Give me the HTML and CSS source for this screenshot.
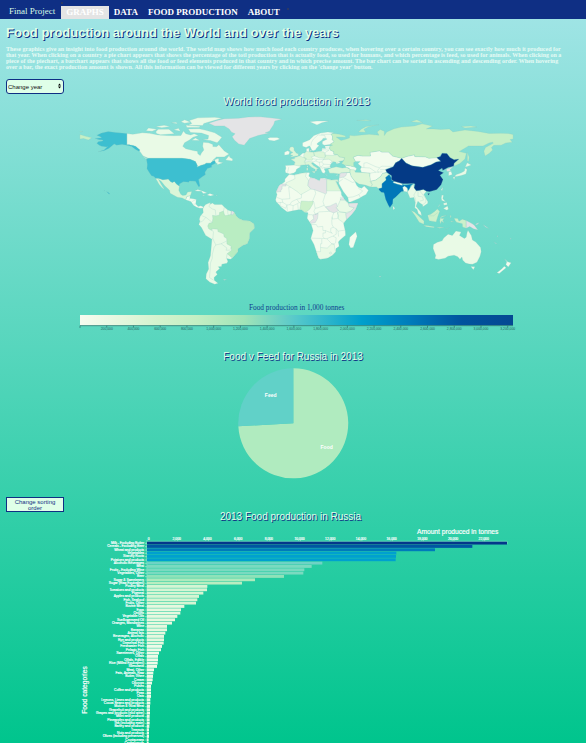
FILE: index.html
```html
<!DOCTYPE html>
<html lang="en">
<head>
<meta charset="utf-8">
<meta name="viewport" content="width=device-width, initial-scale=1">
<title>Final Project</title>
<link rel="stylesheet" href="styles.css">
</head>
<body>
<header class="bar">
  <a class="brand" href="#">Final Project</a>
  <nav>
    <ul class="menu">
      <li><a class="active" href="#">GRAPHS</a></li>
      <li><a href="#">DATA</a></li>
      <li><a href="#">FOOD PRODUCTION</a></li>
      <li><a href="#">ABOUT</a></li>
    </ul>
  </nav>
</header>
<main>
  <section class="intro">
    <h1>Food production around the World and over the years</h1>
    <p>These graphics give an insight into food production around the world. The world map shows how much food each country produces, when hovering over a certain country, you can see exactly how much it produced for<br>
    that year. When clicking on a country a pie chart appears that shows the percentage of the totl production that is actually food, so used for humans, and which percentage is feed, so used for animals. When clicking on a<br>
    piece of the piechart, a barchart appears that shows all the food or feed elements produced in that country and in which precise amount. The bar chart can be sorted in ascending and descending order. When hovering<br>
    over a bar, the exact production amount is shown. All this information can be viewed for different years by clicking on the 'change year' button.</p>
    <div class="picker">
      <select aria-label="Change year"><option>Change year</option></select>
      <svg viewBox="0 0 6 10" aria-hidden="true"><path d="M0 4 3 0 6 4ZM0 6 3 10 6 6Z"/></svg>
    </div>
  </section>

  <section class="world">
    <h2>World food production in 2013</h2>
    <svg class="chart" viewBox="0 0 1758 678" role="img" aria-label="World map">
      <defs>
        <linearGradient id="ramp">
          <stop offset="0" stop-color="#f7fcf0"/><stop offset=".18" stop-color="#d3f3ce"/>
          <stop offset=".27" stop-color="#c3efc4"/><stop offset=".38" stop-color="#a0e4b8"/>
          <stop offset=".5" stop-color="#55c8cb"/><stop offset=".65" stop-color="#00a0cc"/>
          <stop offset=".76" stop-color="#007dbb"/><stop offset=".88" stop-color="#00539e"/>
          <stop offset="1" stop-color="#054892"/>
        </linearGradient>
      </defs>
      <g class="map" transform="translate(889.5 328) scale(3.61 -3.61)">
        <g class="v1">
          <path d="M-141,69.6 -136,69 -128,70.3 -122,69.8 -115,68.5 -108,68 -102,67.8 -96,68 -94,71.8 -92,69.5 -88,68.5 -85,69.5 -81.5,68 -86,66.5 -89,64.2 -93,62 -94.5,59 -92,57 -85,55.3 -82.3,55 -82,52.9 -80,51.3 -79,53.5 -77,56 -78,59 -77.5,62.3 -73,62 -69.5,60.5 -69.5,58.8 -66.5,58.7 -64.5,60.3 -62,57.5 -60,55.2 -56,52.6 -58,51.4 -60,50.2 -66.5,50.2 -70,47 -65,49 -64.5,47.8 -64.8,46.2 -61,45.3 -65.8,43.6 -66,45 -67.2,45.1 -68,47.2 -70,46.5 -71.5,45 -75,45 -76.5,44 -79,43.3 -82.5,42 -82.4,43 -84,46.3 -88.5,48.2 -95,49 -123,49 -127.5,51 -130.3,55 -133.5,58.8 -137,59 -139,60.3 -141,60.3Z"/>
          <path d="M-90,73.5 -81,73.7 -76,72.5 -68,70.3 -62,66.5 -64.5,63.5 -66,62 -71.5,63.8 -78,64.5 -73.5,65 -73,68 -79,70 -88,70.5ZM-117,71 -115,73.2 -106,73.3 -101.5,69.5 -113,68.6 -116,69.5ZM-125,72 -123,74.3 -116,73.2 -120,71.5ZM-90,76.5 -87,78 -89,80.5 -82,82.7 -68,83.1 -62,82.4 -70,80 -77,78 -78,76.3ZM-117,75.5 -110,76.6 -105,75.5 -112,74.5ZM-92,76.5 -80,75.6 -81,74.6 -91,74.7ZM-102,72.8 -98,74 -96.5,71.5ZM-96,79.5 -93,81 -88,79 -93,78.2ZM-104,78.5 -100,79 -99,77.8ZM-59,47.7 -55.8,51.5 -55.5,50 -53,48.5 -53.3,46.8ZM-87,64 -84,66 -80.3,63.8ZM-128,50.7 -123.5,48.4 -125.5,48.8Z"/>
          <path d="M-77.3,8.6 -75.5,10.7 -71.7,12.3 -71.5,10.8 -70,12 -68,10.6 -62,10.7 -60,8.5 -57,6 -51.8,4.3 -50,1 -48,-1 -44,-2.7 -39,-3 -35.3,-5.5 -35,-9 -39,-13 -39.2,-17.8 -41,-22 -44.5,-23.2 -48.5,-26 -48.8,-28.5 -52.2,-32.5 -53.5,-34 -55,-34.9 -58,-34.3 -57,-36.5 -57.8,-38.2 -62,-39 -62.3,-40.8 -65,-41 -63.8,-42.5 -67,-45.5 -65.8,-47.5 -68.5,-50 -68.3,-52.3 -65.2,-54.7 -68,-55.6 -72,-54 -75.3,-51 -75,-47 -73,-43 -73.5,-37.5 -71.5,-32 -70.3,-18.3 -75.5,-15 -79,-8.5 -81.2,-6 -80.2,-3.3 -80.8,-1.5 -80,.8 -77.5,4 -77.8,7Z"/>
          <path d="M142.5,-10.8 145.3,-15 146.2,-18.8 149,-20.5 153,-25 153.5,-28.5 152.5,-32.3 150,-37.3 146.3,-39 143.5,-38.8 140.5,-38 138,-35.5 137.5,-33 135.8,-34.9 134,-32.7 131,-31.5 126,-32.3 123.5,-34 118,-35 115,-34.2 115.7,-31.7 113.5,-26 113.8,-22.5 117,-20.7 121,-19.5 122.3,-17.2 126,-14 129.5,-15 132.5,-11.3 136.8,-12.2 135.5,-15 139.5,-17.5 141,-16.5 141.7,-12.8ZM144.8,-40.8 148.3,-41 147,-43.6Z"/>
        </g>
        <g class="v0">
          <path d="M-92.2,14.6 -91,17.5 -89.2,17.8 -88.3,18.4 -88.6,15.8 -83.3,15 -83.7,11 -81.7,9 -79.5,9.6 -77.3,8.6 -78,7.5 -80.3,7.5 -83,8.3 -85.7,10 -87.6,13ZM-84.8,21.9 -82,23.1 -77,21.5 -74.3,20.2 -77.6,19.9 -79,21.6ZM-74.4,18.5 -72,19.9 -68.5,18.5 -71.5,17.8ZM-78.3,18.4 -76.3,18.2 -77,17.8ZM-67,18.4 -65.7,18.3 -66.5,18Z"/>
          <path d="M-24,65.6 -22,66.4 -16,66.4 -13.7,65 -18.5,63.5 -22.5,64Z"/>
          <path d="M-6,35.8 -2,35.1 5,36.8 10,37.3 11,36.8 10.2,34.3 11.5,33 15.2,32.3 19,30.3 20,32.5 23,32.6 29,31 32,31.3 34.2,31.2 34.9,29.5 32.6,29.9 35.5,24 37.2,21 37.4,18.5 39.5,15.3 43.2,12 43.3,11.5 51.2,11.9 49,6.5 46,2.5 41.6,-1.7 39.2,-5 39.5,-7 40.5,-11 40.8,-14.8 36,-19 34.8,-20.5 35.5,-24 32.8,-26 32.5,-28.5 30,-31.3 26,-33.8 20,-34.8 18.3,-33.8 16.5,-28.6 14.5,-22.5 11.8,-17.5 13.8,-11 12.2,-6 8.8,-.8 9.6,3.8 6.8,4.3 4.3,6.3 1.5,6.2 -4,5.2 -7.7,4.4 -13,8.5 -15,11 -16.8,12.8 -17.4,14.7 -16.2,19 -17,21 -14.5,26.2 -9.8,29.5 -9.6,31.8ZM49.3,-12 50.4,-15.7 47.2,-25 45,-25.4 43.5,-22.5 44.3,-16.5Z"/>
          <path d="M-9.3,43 -1.8,43.4 -1.2,46 -4.7,48.4 -1.5,48.7 -1.5,49.7 2.5,51 5,53.3 8.2,53.6 8.2,57 10.5,57.6 10.5,54.5 14,54 18.5,54.8 21,55.2 21.2,57.4 24.2,57.3 23.5,59.2 28,59.5 27.5,57.5 28,56 31,54.5 31,52.5 34,52 35.5,50.3 40,49.5 39.8,47.9 38,47 35,46.3 36.5,45.3 33.5,44.5 32.5,46 30.7,46.4 28.7,44.5 27.8,42.5 28.5,41.2 26,40.8 23,40.3 24,38 23,36.4 21.3,37.3 19.4,41.5 15,44.5 13.6,45.5 12.3,45 13.8,43 18.4,40.2 16.8,40.3 16.5,38.5 15.7,38 15.7,40 12.3,41.8 10.2,43.9 7.5,43.8 3.2,43.2 3.2,41.9 0,40 -.5,38 -2.2,36.8 -5.5,36 -9,37 -9.4,38.8 -8.8,41Z"/>
          <path d="M5,59 5,62 11,64.5 14.5,68 20,70 26,71 31,70.3 28.5,69 30,67.5 29.8,64.5 31.3,62.8 28,60.5 23,59.9 21.4,61 21.5,63 25.4,65 24,65.8 22,65.6 21.3,64.3 17.3,61.5 17.2,60.6 18.8,59.7 16.6,57.5 16,56.2 14.2,55.4 12.8,55.5 11.2,59 10.5,59.3 8,58ZM-10,51.6 -10,54 -7.5,55.3 -5.6,54.5 -6.3,52.2ZM11,79.5 17,80 27,80 21,78.5 17,76.8ZM23.6,35.4 26.3,35.2 24.8,34.9ZM32.4,35 34.5,35.6 33.8,34.7ZM11,55.6 12.5,56 12,54.8ZM8.6,42 9.5,43 9.4,41.5Z"/>
          <path d="M47,50 51,51.5 55,51 61.5,51 61,54 69,55.3 71,54.2 76.5,54.2 80,50.9 87.4,49.1 85.5,47 82.3,45.3 80.3,42 74,40 75,37.4 71.5,36.5 70,34 66,31 61,29.8 60.8,34.5 61,36.7 54,37.3 53,40 54,42 51,44.5 53,46.5 49,46.5ZM40,43.4 45,42.7 48.5,41.8 50,40.3 48.8,38.5 44.8,39.2 43.5,41 41.5,41.5Z"/>
          <path d="M34.9,29.5 36,36 36.7,36.8 42,37.2 44.5,37.3 45.5,34 48.5,30 50,26.7 51.5,25 54,24.1 56.3,26 59.8,22.5 57.8,19 55,17.5 52,15.7 45,12.8 43.3,12.7 42.7,16.5 39,21.2 35.2,28Z"/>
          <path d="M87.4,49.1 92,50.7 98,52 98.3,50.5 107,50.3 110,49.2 116.5,49.8 119.8,46.7 116,46 111.8,43.7 105,41.6 96,42.8 91,45.2ZM80.2,28.8 81,30 88,28 88,26.5 84,27.4ZM88.2,25 89.8,26 92,24.5 92.2,21 89,21.7ZM80,9.7 81.8,7.5 80.5,6Z"/>
          <path d="M126.5,37.8 128.5,38.3 129.4,35.5 126.4,34.5ZM120.2,23 121.7,25.2 121,22Z"/>
          <path d="M172.7,-34.5 175.5,-37 178.4,-37.7 176,-41.3 174,-39.3 174.8,-37ZM172.7,-40.6 174.2,-41.8 171,-44.5 168.5,-46.6 166.5,-46 170.5,-43Z"/>
        </g>
        <g class="v1">
          <path d="M92.2,21 93,22.2 94,24 97.3,28.2 97.7,24.5 99.5,22 102,22.4 105.5,23.2 108,21.6 105.8,19 109.2,13 109,11.5 105,8.7 104.8,10.5 102.5,12 100.9,13.4 99.3,9.3 103.3,4.5 104,1.4 101.3,3 100.2,6.5 98.3,8 98.7,12 97.6,16.5 94.3,16Z"/>
          <path d="M131,34 133,35.5 137,37 139.5,38.5 140,41 141.8,39.8 140.8,36 137,34.7 133,34ZM130,33.5 131.8,33.5 131,31.3ZM140.2,41.8 141.8,45.3 145.3,43.5 142,42.3Z"/>
          <path d="M120.3,16 120.8,18.5 122.2,18.3 121.6,15.5 124,13 120.7,14ZM122,7.3 125.5,9.5 126.3,7 125,5.8ZM122,11.8 125,12.3 125.2,10.5 122.5,10ZM117.3,8.4 119.5,11.3 118.5,9.5Z"/>
          <path d="M-1.8,35.1 5,36.8 8.3,37 7.5,34 9,32.2 10,30.5 9.5,26.5 11.9,23.5 4.2,19.2 3.2,19 1.2,21 -4.8,25 -8.7,27.3 -8.7,28.7 -3.5,31 -1.2,32.2Z"/>
          <path d="M34,9 36.5,14.5 40,14.5 43,11.5 44,9 48,8 45,5 41,3.9 36,4.5 33,8ZM34.9,-1.5 34,4 36,4.5 41,3.9 41.6,-1.7 39.2,-4.6ZM20,-28.5 20,-25 25.5,-25.6 29.3,-22 31.3,-22.3 32,-26.8 32.5,-28.5 30,-31.3 26,-33.8 20,-34.8 18.3,-33.8 16.5,-28.6Z"/>
        </g>
        <g class="v2">
          <path d="M-117.2,32.5 -114.8,32.5 -111,31.3 -106.5,31.8 -104.7,29.8 -103.2,29 -101.5,29.8 -99.5,27.5 -97.3,26 -97.8,22.5 -96.2,19.2 -94.5,18.2 -91.8,18.6 -90.5,21 -87,21.5 -88,18.3 -89.2,17.8 -91,17.5 -92.2,14.6 -95,16.1 -99,16.7 -105,20 -105.5,22.5 -109.3,26 -112.5,30 -114.7,31.6 -112.5,27.5 -109.6,23 -112.2,25 -114.3,27.5 -115.8,30.2Z"/>
          <path d="M25,31.6 29,31 34.2,31.2 34.9,29.5 32.6,29.9 35.5,24 36.8,22 25,22Z"/>
          <path d="M-1.8,43.4 -1.2,46 -4.7,48.4 -1.5,48.7 -1.5,49.7 2.5,51 8,49 7,46 7.5,43.8 3.2,43.2 3,42.5ZM6,51.8 7,53.6 8.5,54.9 10,54.5 14.2,54 15,51 12.3,50.3 13.7,48.6 13,47.5 7.6,47.6 8,49 6.2,49.5ZM14.2,54 18.5,54.8 23,54.3 24,50.5 22.5,49.2 19,49.5 15,51ZM24,50.5 24,51.7 30.5,51.4 34,52.2 35.5,50.3 40,49.5 39.8,47.9 38,47 35,46.3 33.5,44.5 32.5,46 30.7,46.4 28.2,45.5 29.8,46.4 27,48.3 22.5,48ZM26.2,40 29,41.1 33,42 38,41 41.5,41.5 44.5,40 44.5,37.3 42,37.2 36.7,36.8 36,36 34,36.3 31,36.7 27.5,36.7Z"/>
          <path d="M-5.5,50 1.4,51.2 1.6,52.8 0,53.3 -2,55.8 -2,57.6 -3.2,58.6 -5,58.5 -6,56.5 -4.8,54.8 -3,54 -4.6,53 -5,51.8 -3,51.5ZM7,46 10.5,46.5 13.6,46 12.3,45 13.8,43 18.4,40.2 16.8,40.3 16.5,38.5 15.7,38 15.7,40 12.3,41.8 10.2,43.9 7.5,43.8ZM12.5,38 15.5,38.2 15,36.7ZM8.4,39 8.4,41 9.6,41 9.5,39.2Z"/>
          <path d="M44.5,39.7 48,39.5 49,37.5 54,37.3 61,36.7 60.8,34.5 61.5,31 63,27 61.6,25.2 57,26.8 52,27.6 48.5,30 45.5,34 44.5,37.3ZM61,29.8 66,31 70,34 71.5,36.5 75,37 77,35.5 74,33 74.5,31 71,28 71,24.5 68.2,23.7 66.5,25.3 61.6,25.2 63,27Z"/>
        </g>
        <g class="v3">
          <path d="M2.7,6.4 4.3,6.3 6.8,4.3 8.5,4.7 11,6.8 13.5,11 14,13.3 10,13.2 4,13.6 3.6,11.7Z"/>
          <path d="M109,1.8 111.5,2.5 115,5 117,7 119,5 117.5,1 116,-3.8 110.2,-2.8ZM95.3,5.6 98,4.5 103.5,-.8 106,-3 105.8,-5.8 102,-4 98.5,1.5ZM105.3,-6.7 108.5,-6.7 114.5,-7.8 114.3,-8.6 108,-7.8ZM119.8,-5.5 119,-3 119.8,0 121,1.2 125,1.5 120.5,.3 120.3,-1 123,-1 121.5,-2.3 122.5,-4.8 120.5,-3ZM116,-8.5 123,-8.3 119,-9ZM123.5,-10.2 127,-8.5 125,-9.5ZM127.5,2 128.6,1 128.2,-.7ZM128,-3 130.8,-3.3 128.5,-3.6ZM131,-.8 134,-.9 135,-3.3 137.8,-1.5 141,-2.6 141,-9.1 138,-8 137.8,-5.3 133,-4 132,-2.8Z"/>
        </g>
        <g class="v4">
          <path d="M28,59.5 30,60 28,60.8 31.3,62.8 29.8,64.5 30,67.5 28.5,69 31,69.7 36,69 40.5,67.8 41,66.5 33,66.7 37,63.9 40,64.6 44,66 44.2,68.3 48,67.7 54,68.5 60.5,69 68.5,68.3 67,71 69.5,73 73,71.5 73,68 75,71 81,73.6 87,75 98,76 104.3,77.7 113,75.8 108,73.5 114,73.5 120,73 127,73.5 130,71 140,72.6 151,71.4 160,69.7 170,69.8 176,69.7 180,68.9 180,65 177.5,64.7 179.3,62.5 174,61.8 170,60 164,59.8 162,58 163,56 160,53 156.7,51 155.7,55 157,58 163.5,61.5 163,62.5 160,61.8 155,59.3 143,59.3 135.3,54.7 141.2,53.2 140,48.5 135.5,44.5 131,42.7 131,45 135,48.4 131,47.8 127.5,49.8 125,53 121,53.3 118,49.6 110,49.2 107,50.3 98.3,50.5 98,52 92,50.7 87.4,49.1 80,50.9 76.5,54.2 71,54.2 69,55.3 61,54 61.5,51 55,51 51,51.5 47,50 49,46.5 47.5,45.5 47.5,43 48.5,41.8 45,42.7 40,43.4 37.5,44.8 39.3,47.2 40,49.5 35.5,50.3 34,52.2 31,52.5 31,54.5 28,56 27.5,57.5Z"/>
          <path d="M51.5,71 54,73.5 58,75.5 68.5,77 60,75.3 56,73.2 57.5,70.7ZM95,79.5 100,81 105,78.7ZM137,75.5 145,75.8 150,75 140,74.2ZM142,54 143.5,50 143,46.5 142,47ZM50,80.5 58,81 62,80.3ZM-180,68.9 -175,67.3 -170,66.1 -173,64.3 -177,65.5 -180,65ZM-180,71.4 -177.5,71.2 -180,70.9Z"/>
        </g>
        <path class="v5" d="M-51.6,4.2 -50,1 -48,-1 -44,-2.7 -39,-3 -35.3,-5.5 -35,-9 -39,-13 -39.2,-17.8 -41,-22 -44.5,-23.2 -48.5,-26 -48.8,-28.5 -52.2,-32.5 -53.4,-33.7 -57.6,-30.2 -53.8,-27.2 -54.6,-25.5 -54.3,-24 -57.8,-22.1 -58,-17.5 -60.2,-16.2 -60.5,-13.8 -65.3,-11.8 -65.4,-9.8 -70.5,-9.5 -70.6,-11 -73,-9.4 -73.8,-7.3 -72.8,-5 -70,-4.3 -69.5,-1 -69.8,1.7 -67,1.2 -64,2 -64,4 -60.7,5.2 -60,2.5 -59,1.3 -56.5,1.9 -54.5,2.3 -52.9,2.2Z"/>
        <g class="v6">
          <path d="M-141,69.6 -145,70 -150,70.5 -156.5,71.3 -162,70 -166,68.3 -163,67 -162,66.2 -167.5,65.6 -164,64.5 -161,64.3 -161,63.5 -164.5,63 -166,61.6 -164,60 -162,59 -158,58.5 -157,58.8 -160,56 -165,54.5 -160,55.3 -156,57.3 -153.5,59.2 -151.5,61 -149.5,60 -145,60.5 -141,60 -137,58.8 -134,56.5 -131,55 -130,56 -133.5,58.8 -135.5,59.7 -139,60.3 -141,60.3Z"/>
          <path d="M-123,49 -95,49 -88.5,48.2 -84,46.3 -82.4,43 -82.7,41.7 -79,43.2 -76.5,44 -75,45 -71.5,45 -70,46.5 -68,47.2 -67.2,45 -70.5,43.3 -70.5,41.7 -74,40.5 -76,37.5 -75.7,35.3 -78,33.9 -81.3,31.5 -80.2,26 -81.2,25.3 -82.7,27.8 -84,30 -89,30.2 -89.5,29.2 -94,29.6 -97.3,27.7 -97.3,26 -99.5,27.5 -101.5,29.8 -103.2,29 -104.7,29.8 -106.5,31.8 -111,31.3 -114.8,32.5 -117.2,32.5 -118.5,34 -120.6,34.6 -122.5,37.5 -124.3,40.3 -124,44 -124.7,48.3ZM-160,22.2 -159.3,21.9 -160,21.8ZM-158,21.5 -156.5,20.9 -155,19.7 -155.8,19.1Z"/>
        </g>
        <path class="v7" d="M68.2,23.7 71,24.5 71,28 74.5,31 74,33 77,35.5 79,32.5 78.8,31 81,30 80.2,28.8 84,27.4 88,26.5 88.3,28 89,26.8 92,27 97.3,28.2 95,26.5 94,24 93,22.2 92,24.5 89.8,26 88.2,25 89,21.7 87,21.3 82.3,16.6 80.2,15 80,11.5 77.6,8 76.3,10 74,15 72.7,20.5 70.5,20.8 69,22.3Z"/>
        <path class="v8" d="M74,39.5 80.3,42 82.3,45.3 85.5,47 87.4,49.1 91,45.2 96,42.8 105,41.6 111.8,43.7 116,46 119.8,46.7 116.5,49.8 119.5,50.5 121,53.3 125,53 127.5,49.8 131,47.8 135,48.4 131,45 130.6,42.5 126,41.4 121.5,39 121,40.8 118,39 122.3,37 119.3,35 121.8,31.5 120.2,27 116.5,23 110.5,21.3 108,21.6 105.5,23.2 102,22.4 99.5,22 97.7,24.5 98.5,27.7 97.3,28.2 92,27.9 88.5,27.9 81,30 78.8,31.5 79,34.5 75,37.4ZM109,19.8 110.8,19.8 109.5,18.4Z"/>
        <g class="none">
          <path d="M-73,78.2 -66,80.5 -60,82 -48,82.3 -40,83.4 -30,83.6 -20,82.5 -12,81.5 -18,80 -19,77 -21,74 -22.5,71.5 -26,70.3 -22.5,70 -32,68 -39,65.5 -41,63 -43.5,60 -48,61 -51.5,64 -53.5,67 -51,69.5 -54,70.8 -56,73.5 -60,76 -68,76Z"/>
          <path d="M11.5,33 15.2,32.3 19,30.3 20,32.5 25,31.6 25,20 24,19.5 15,23 11.9,23.5 9.5,26.5 10,30.5ZM-13,27.7 -8.7,27.7 -8.7,26 -12,26 -12,23.4 -13,23 -13,21.3 -17,21 -14.5,26.2ZM24,8.7 28,9.5 33,12 34,9 33,8 35,5.5 31,3.7 27.5,5ZM43.3,11.5 51.2,11.9 49,6.5 46,2.5 41.6,-1.7 41,3 45,5 48,8 44,9ZM36.5,14.5 38.5,18 39.5,15.3 43,12.5 40,14.5ZM11.2,-3.9 13,-2 14.4,-1.5 13.5,2 18,3.5 17.5,-1 15.5,-4.5 12,-5ZM36,36 36.7,36.8 42,37.2 41,34.5 38.5,33.3 35.8,32.8ZM-54,5.7 -51.6,4.2 -52.9,2.2 -54.5,2.3ZM124.5,40 130.5,42.3 127.5,39.5 128.5,38.3 125,38Z"/>
          <path d="M141,-2.6 145.8,-5.2 147.8,-6.5 150.8,-10.5 147,-9.5 144,-7.7 141,-9.1ZM148.5,-5.7 152,-4.3 150,-6.2ZM155,-6 158,-8 160,-9.5 157,-8ZM164,-20.2 166.8,-22.3 165.5,-21.8ZM177.3,-17.8 178.5,-17.5 178,-18.2ZM167,-15 167.5,-16.3 166.8,-15.8ZM-61,-51.8 -58,-51.5 -60,-52.3ZM69,-48.8 70.3,-49.2 69.2,-49.6Z"/>
        </g>
        <g class="lines">
          <path d="M-71.7,12 -72.8,9 -70,7 -67.5,6.2 -67,1.2M-78.8,1.4 -75.3,0 -70,-4.2M-75.3,0 -78.3,-3.4 -80.2,-4M-70.5,-9.5 -69,-12.3 -69.5,-17.5 -70.3,-18.3M-69.5,-17.5 -68.5,-20 -67,-23 -68.5,-25 -70,-31 -70,-34 -71.5,-38 -71.8,-44 -72.3,-50 -69,-52.2M-67,-23 -62.8,-22 -58.2,-19.8M-62.6,-22 -57.8,-25.5 -58.6,-27.3 -55.8,-27.3 -54,-25.5M-57.6,-30.2 -58.3,-34M-60,8.3 -60.7,5.2M-57.2,6 -57,3 -56.5,1.9M-54,5.8 -54.5,2.3M-88.6,15.8 -89.5,14M-83.3,15 -87,13M-83.7,11 -85.7,11"/>
          <path d="M-4.8,25 -6.5,25 -5.5,15.5 -12,15 -16.3,16.5M4.2,19.2 4,16 .2,15 -4,13 -5.5,10.5 -8,10.3 -11.4,12.4 -12,15M.2,15 2.3,12.3 3.6,11.7M-11.4,12.4 -16.7,12.4M-5.5,10.5 -2.8,9.7 0,11 2.3,12.3M-2.8,9.7 -3,5.1M1,11 1.5,6.2M-8,10.3 -7.5,4.4M-13.5,12.6 -13.7,9.5 -11,8.5 -9,7.5 -8,10M15,23 16,20 13.5,13.8 14.5,12.5 15,10 15.5,7.5 14.5,5 16,2M24,19.5 22,13 23,10 18,8 15.5,7.5M23,10 24,8.7 27.5,5 18.5,4.5 16,2M36.5,17 36.5,14.5"/>
          <path d="M31,3.7 29.7,.5 29.6,-1.4 34,-1 35,1.5 34,4M29.7,.5 29.3,-3 29.5,-6 30.7,-8.3 28.5,-9 28.4,-12 29.8,-13.3M12.2,-6 16.5,-6 17.5,-8 21.8,-7.5 22,-11 24,-11 24,-13 22,-13 22,-16.2 23.4,-17.6 12,-17.3M24,-11 29.8,-13.3M25.2,-17.8 28,-16.5 30.3,-15.6 33,-14 33,-9.5 30.7,-8.3M34.5,-11.5 40.4,-10.6M33,-9.5 34.5,-11.5 35,-16M30.3,-15.6 33,-17 32.5,-21 31.3,-22.3 29.3,-22 25.2,-17.8 23.4,-17.6M21,-18 21,-22 20,-22 20,-25M27.2,-29.5 28.7,-28.7 29.2,-30 28,-30.6ZM9.6,2.2 13.3,2.2"/>
          <path d="M-7,42 -6.5,41.5 -7.2,38 -7.5,37.2M6,46.2 7.6,47.6M13.7,48.6 17,48.2 16,46.8 13.6,46M17,48.2 22.5,48.2 21,46 18.5,45.8 16,46.8M21,46 22.5,44.2 28.5,43.8M19,46 19.2,44 19.5,42 21,42 22.5,44.2M22.5,42 23,41.3 26.3,41.8 28,42M20,41.9 21,40.8 23,41.3M24,51.7 24,54 27,55.8M21,56.2 27,56M24.3,57.8 27.4,57.5M12,59.5 12.3,62 14,65 18,68.5 23.5,68 24,65.8M20.5,69 25.5,69 28.5,69"/>
          <path d="M56,41.3 56,45 58.5,45.5 61,44.3 66,42 69,41.3 71,42.5 80,42.3M53,41.5 56,41.3 61,41 66,37.5 61,36.7M66,37.5 71.5,37.8M69,41 67.5,39 68,37M69.5,39.6 74,39.6M38.5,33.3 42,31.5 46.5,29 48.5,29.5M35,29.3 38.5,31.8M42.7,16.5 47,17 52,19 55,22 51.5,24M52,19 53,16.5M99.5,22 97.5,18.5 99,15 99,12M101,21.5 101,17.5 104.8,17 105.5,14.3 102.5,13.5M102,22.4 104,20 107.5,15.5 107.5,12.5 105,10.6M110,1.2 114,1.3 117.5,4"/>
        </g>
      </g>
      <g class="legend">
        <text class="legend-title" x="890" y="605">Food production in 1,000 tonnes</text>
        <rect x="240" y="621" width="1299" height="31" fill="url(#ramp)"/>
        <path id="legend-axis" d="M240 660V653H1539"/>
        <g id="legend-ticks"></g>
      </g>
    </svg>
  </section>

  <section class="pie">
    <h2>Food v Feed for Russia in 2013</h2>
    <svg class="chart" viewBox="0 0 1758 378" role="img" aria-label="Food and feed shares">
      <path fill="#b0ebbf" d="M880 178V13A165 165 0 1 1 715 187Z"/>
      <path fill="#61d1c8" d="M880 178 715 187A165 165 0 0 1 880 13Z"/>
      <text x="980" y="256">Food</text>
      <text x="812" y="100">Feed</text>
    </svg>
  </section>

  <section class="bars">
    <button type="button">Change sorting order</button>
    <h2>2013 Food production in Russia</h2>
    <svg class="chart" viewBox="0 0 1758 657" role="img" aria-label="Bar chart of food production in Russia">
      <text class="axis-title" x="1373" y="30">Amount produced in tonnes</text>
      <text class="axis-title" transform="translate(262 498) rotate(-90)">Food categories</text>
      <path class="axis" d="M441 657V52H1521V60"/>
      <g id="ticks"></g>
      <g id="rows"></g>
    </svg>
  </section>
</main>
<script src="charts.js"></script>
</body>
</html>
```
FILE: styles.css
```css
* { box-sizing: border-box; }

body {
  margin: 0;
  font-family: "Liberation Sans", Arial, sans-serif;
  background: linear-gradient(#a3e5e7, #00c58d);
}

.bar {
  display: flex;
  height: 19px;
  padding-left: 9px;
  background: #0f2f84;
  font-family: "Liberation Serif", Georgia, serif;
  font-size: 9px;
  line-height: 12px;
}

.bar a { color: #fff; text-decoration: none; }
.bar .brand { padding-top: 5px; color: #d9fbe6; }

.menu {
  display: flex;
  margin: 0 0 0 6px;
  padding: 6px 0 0;
  list-style: none;
}

.menu li { position: relative; }

.menu a {
  display: block;
  height: 13px;
  padding: 0 5px;
  font-weight: bold;
}

.menu .active { background: #e4e4e4; }

.menu li:first-child::before,
.menu li:last-child::after {
  content: "";
  position: absolute;
  top: -4px;
  left: 0;
  width: 2px;
  height: 2px;
  border-radius: 1px;
  background: #333c5c;
}

.menu li:last-child::after { top: 2px; left: auto; right: -4px; }

.intro { padding: 6px 6px 0; }

h1 {
  margin: 0 0 5px;
  color: #dfffe8;
  font-size: 13px;
  line-height: 16px;
  text-shadow: 1px 1px #0f2f84;
}

p {
  margin: 0 0 9px;
  color: #e6fbf5;
  font-family: "Liberation Serif", Georgia, serif;
  font-size: 6px;
  font-weight: bold;
  line-height: 6px;
  white-space: nowrap;
}

.picker { position: relative; width: 58px; height: 15px; }

.picker svg {
  position: absolute;
  top: 4px;
  right: 3px;
  width: 3px;
  height: 6px;
}

select {
  display: block;
  width: 100%;
  height: 15px;
  padding: 0 1px;
  appearance: none;
  border: 1px solid #0f2f84;
  border-radius: 3px;
  background: #dfffe8;
  color: #111;
  font: 6px "Liberation Sans", Arial, sans-serif;
}

h2 {
  margin: 0 0 2px;
  color: #dfffe8;
  font-size: 10px;
  font-weight: normal;
  line-height: 10px;
  text-align: center;
  text-shadow: 1px 1px #0f2f84;
}

.chart { display: block; width: 100%; }

.world { padding-top: 2px; }
.world h2 { padding-left: 7px; font-size: 11px; }
.pie { padding-top: 18px; }
.bars { padding-top: 7px; }
.bars h2 { padding-right: 5px; }

button {
  display: block;
  width: 58px;
  height: 15px;
  margin-left: 6px;
  padding: 0 4px;
  border: 1px solid #0f2f84;
  border-radius: 0;
  background: #dfffe8;
  color: #0f2f84;
  font: 6px/6px "Liberation Sans", Arial, sans-serif;
}

.map path { stroke: #86c9be; stroke-width: 0.2; stroke-linejoin: round; }
.map .lines path { fill: none; }
.v0 { fill: #f2fcee; }
.v1 { fill: #e9fae6; }
.v2 { fill: #dbf6d8; }
.v3 { fill: #ccf1cb; }
.v4 { fill: #c5f0c6; }
.v5 { fill: #b9edc2; }
.v6 { fill: #3dbfd0; }
.v7 { fill: #0077b8; }
.v8 { fill: #043a86; }
.none { fill: #e4e4e6; }

svg text { text-anchor: middle; }
.legend path { fill: none; stroke: #2b6a66; stroke-width: 2; }
.legend text { fill: #24605c; font-size: 10px; }

.legend .legend-title {
  fill: #0f3d8e;
  font-family: "Liberation Serif", Georgia, serif;
  font-size: 22px;
}

.pie text { fill: #fff; font-size: 15px; font-weight: bold; }
.bars text { fill: #fff; stroke: #fff; stroke-width: 0.5; font-size: 10px; }
.bars .axis-title { font-size: 20px; }
.bars .label { text-anchor: end; }
.axis { fill: none; stroke: #a5ead0; stroke-width: 2; }
```
FILE: charts.js
```js
const NS = "http://www.w3.org/2000/svg";

function add(parent, tag, attrs, text) {
  const el = document.createElementNS(NS, tag);
  for (const key in attrs) el.setAttribute(key, attrs[key]);
  if (text) el.textContent = text;
  parent.appendChild(el);
}

const legend = document.getElementById("legend-ticks");
for (let i = 1; i <= 16; i++) {
  const x = 240 + i * 80.2;
  add(legend, "path", { d: `M${x} 653v6` });
  add(legend, "text", { x, y: 667 }, (i * 200000).toLocaleString("en-US"));
}

const ticks = document.getElementById("ticks");
for (let i = 0; i <= 11; i++) {
  const x = 441 + i * 92.1;
  add(ticks, "path", { class: "axis", d: `M${x} 48v4` });
  add(ticks, "text", { x: i ? x - 3 : x + 5, y: 48 }, (i * 2000).toLocaleString("en-US"));
}

// Category, amount in 1,000 tonnes
const data = [
  ["Milk - Excluding Butter", 23450], ["Cereals - Excluding Beer", 21200],
  ["Wheat and products", 18760], ["Vegetables", 16250], ["Starchy Roots", 16220],
  ["Potatoes and products", 16210], ["Alcoholic Beverages", 11430], ["Meat", 10720],
  ["Fruits - Excluding Wine", 10260], ["Vegetables, Other", 10190], ["Beer", 8920],
  ["Sugar & Sweeteners", 7030], ["Sugar (Raw Equivalent)", 6190], ["Poultry Meat", 3940],
  ["Tomatoes and products", 3910], ["Pigmeat", 3680], ["Apples and products", 3380],
  ["Fish, Seafood", 3280], ["Fruits, Other", 3190], ["Bovine Meat", 2430], ["Eggs", 2210],
  ["Onions", 2180], ["Vegetable Oils", 1980], ["Sunflowerseed Oil", 1820],
  ["Oranges, Mandarines", 1630], ["Wine", 1300], ["Bananas", 1300], ["Animal fats", 1200],
  ["Beverages, Alcoholic", 1110], ["Rye and products", 1100], ["Demersal Fish", 1090],
  ["Freshwater Fish", 980], ["Pelagic Fish", 910], ["Sweeteners, Other", 780],
  ["Offals", 720], ["Offals, Edible", 715], ["Rice (Milled Equivalent)", 690],
  ["Stimulants", 650], ["Meat, Other", 460], ["Fats, Animals, Raw", 420],
  ["Butter, Ghee", 390], ["Cream", 360], ["Oilcrops", 320], ["Pulses", 270],
  ["Coffee and products", 265], ["Peas", 260], ["Oats", 255],
  ["Lemons, Limes and products", 220], ["Cocoa Beans and products", 215],
  ["Mutton & Goat Meat", 205], ["Grapefruit and products", 195],
  ["Grapes and products (excl wine)", 190], ["Millet and products", 180],
  ["Pineapples and products", 175], ["Tea (including mate)", 165],
  ["Barley and products", 150], ["Treenuts", 140], ["Nuts and products", 135],
  ["Olives (including preserved)", 120], ["Crustaceans", 110], ["Cephalopods", 100]
];

const scale = [
  [23000, "#04378a"], [20000, "#0057a3"], [18000, "#007abb"], [16000, "#00a0cf"],
  [11000, "#6ed3c5"], [10000, "#7adac0"], [8000, "#8fe2b9"], [7000, "#aeeabd"],
  [6000, "#b9edc0"], [3000, "#d5f5d3"], [1000, "#e6f8df"], [0, "#eefbe8"]
];

const rows = document.getElementById("rows");
data.forEach(([name, amount], i) => {
  const y = 53 + i * 10;
  const fill = scale.find(([min]) => amount >= min)[1];
  add(rows, "rect", { x: 441, y, width: Math.round(amount * 0.04605), height: 8.6, fill });
  add(rows, "path", { class: "axis", d: `M435 ${y + 5}h6` });
  add(rows, "text", { class: "label", x: 432, y: y + 7 }, name);
});
```
